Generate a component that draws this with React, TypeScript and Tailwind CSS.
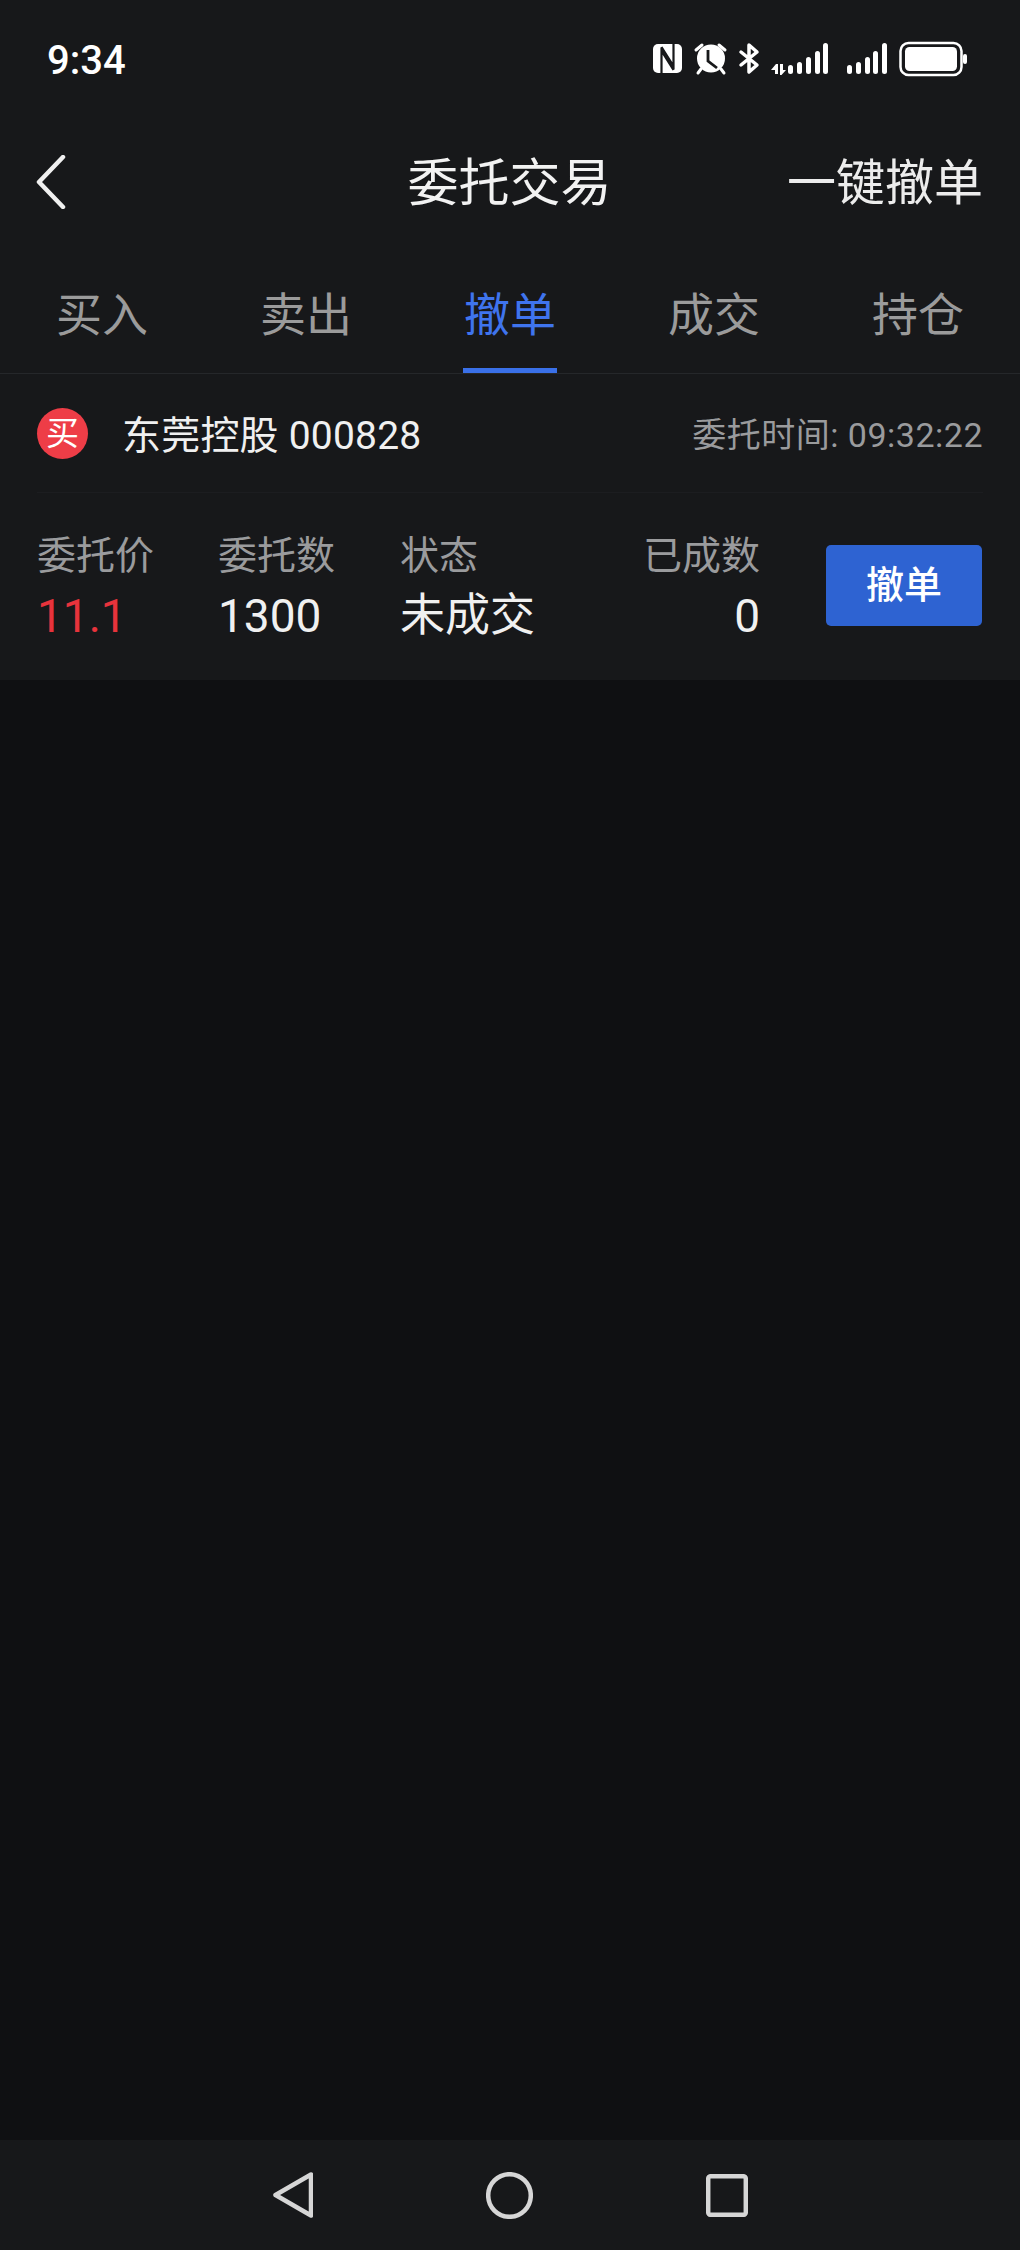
const cjk = "font-['Roboto','Noto_Sans_CJK_SC','Noto_Sans',sans-serif]";

function StatusIcons() {
  const bars = (xs: number[]) => {
    const tops = [65, 62, 57, 51, 43];
    return xs.map((x, i) => <rect key={x} x={x} y={tops[i]} width="5" height={74 - tops[i]} rx="2.5" fill="#fff" />);
  };
  return (
    <svg viewBox="650 40 320 38" className="w-[320px] h-[38px]">
      {/* NFC */}
      <rect x="653" y="44" width="29" height="29" rx="5" fill="#fff" />
      <path d="M661.500 74V51l12 19M673.500 43v23l-12-19" fill="none" stroke="#17181a" strokeWidth="2.200" />
      {/* Alarm */}
      <path d="M696 50l6-5M725 50l-6-5" stroke="#fff" strokeWidth="3" strokeLinecap="round" />
      <path d="M698 73l3-4M724 73l-3-4" stroke="#fff" strokeWidth="3" strokeLinecap="round" />
      <circle cx="711" cy="58.500" r="14" fill="#fff" />
      <path d="M708 50v11l9 7" fill="none" stroke="#17181a" strokeWidth="2.800" />
      {/* Bluetooth */}
      <path d="M741 52l16 13-8 7V45l8 7-16 13" fill="none" stroke="#fff" strokeWidth="3.500" strokeLinejoin="round" strokeLinecap="round" />
      {/* Up / down arrows */}
      <path d="M771 70l5-6h2v10h-3v-4zM780 64h3v6h3l-4.500 5H780z" fill="#fff" />
      {bars([788, 797, 806, 815, 823])}
      {/* Signal 2 */}
      {bars([847, 856, 865, 873, 882])}
      {/* Battery */}
      <rect x="900.500" y="43" width="61" height="32" rx="8" fill="none" stroke="#fff" strokeWidth="2.500" />
      <rect x="905" y="47" width="52" height="24" rx="4.500" fill="#fff" />
      <rect x="963" y="54" width="4" height="10" rx="2" fill="#fff" />
    </svg>
  );
}

function Column({ label, value, width, right, red, text }: { label: string; value: string; width: string; right?: boolean; red?: boolean; text?: boolean }) {
  return (
    <div className={`${width} ${right ? "text-right" : ""} flex flex-col`}>
      <div className="text-[39px] leading-[50px] text-[#9a9b9d]">{label}</div>
      <div className={`leading-[60px] mt-[5px] font-normal ${text ? "text-[45px]" : "text-[46px]"} ${red ? "text-[#e8333c]" : "text-[#f0f0f0]"}`}>{value}</div>
    </div>
  );
}

export default function App() {
  const tabs = ["买入", "卖出", "撤单", "成交", "持仓"];
  return (
    <div className={`${cjk} w-[1020px] h-[2250px] flex flex-col bg-[#0f1012] overflow-hidden`}>
      <div className="bg-[#17181a]">
        {/* Status bar */}
        <div className="h-[92px] pt-[40px] pl-[47px] pr-[50px] flex justify-between items-start">
          <span className="font-medium text-[40px] leading-[42px] text-white">9:34</span>
          <StatusIcons />
        </div>
        {/* Header */}
        <div className="h-[180px] pl-[36px] pr-[37px] grid grid-cols-[1fr_auto_1fr] items-center">
          <svg viewBox="0 0 30 54" className="w-[30px] h-[54px]">
            <path d="M27 2 3 27l24 25" fill="none" stroke="#f0f0f0" strokeWidth="4.500" strokeLinecap="round" strokeLinejoin="round" />
          </svg>
          <div className="text-[51px] leading-[60px] text-[#f2f2f2] mt-[3px]">委托交易</div>
          <div className="text-right text-[49px] leading-[60px] text-[#ececec] mt-[3px]">一键撤单</div>
        </div>
        {/* Tabs */}
        <div className="h-[102px] grid grid-cols-5 border-b border-[#25272a]">
          {tabs.map((t) => (
            <div key={t} className="flex flex-col items-center">
              <div className={`mt-[13px] h-[60px] text-[46px] leading-[60px] ${t === "撤单" ? "text-[#3f74ee]" : "text-[#9b9b9b]"}`}>{t}</div>
              <div className={`mt-[23px] w-[94px] h-[5px] ${t === "撤单" ? "bg-[#3a70e8]" : ""}`} />
            </div>
          ))}
        </div>
        {/* Order card */}
        <div className="px-[37px] h-[306px] flex flex-col">
          <div className="h-[119px] flex items-center justify-between border-b border-[#1c1d20]">
            <div className="flex items-center">
              <div className="w-[51px] h-[51px] rounded-full bg-[#ee3d47] flex items-center justify-center text-[33px] leading-none text-white">买</div>
              <div className="ml-[34px] mt-[6px] text-[39px] tracking-[0.2px] leading-[50px] text-[#f0f0f0]">东莞控股 000828</div>
            </div>
            <div className="mt-[4px] text-[34px] tracking-[0.5px] leading-[50px] text-[#9a9b9d]">委托时间: 09:32:22</div>
          </div>
          <div className="flex items-start pt-[38px]">
            <Column label="委托价" value="11.1" width="w-[181px]" red />
            <Column label="委托数" value="1300" width="w-[182px]" />
            <Column label="状态" value="未成交" width="w-[180px]" text />
            <Column label="已成数" value="0" width="w-[180px]" right />
            <button className="ml-[66px] mt-[14px] w-[156px] h-[81px] rounded-[5px] bg-[#2e63d2] text-[38px] font-medium text-white flex items-center justify-center">撤单</button>
          </div>
        </div>
      </div>
      <div className="flex-1" />
      {/* Navigation bar */}
      <div className="h-[110px] bg-[#17181a] flex items-center justify-center gap-[173px]">
        <svg viewBox="0 0 40 46" className="w-[40px] h-[46px]">
          <path d="M38 2.500 2.500 23 38 43.500z" fill="none" stroke="#d6d6d6" strokeWidth="4.500" strokeLinejoin="round" />
        </svg>
        <svg viewBox="0 0 47 47" className="w-[47px] h-[47px]">
          <circle cx="23.500" cy="23.500" r="21.300" fill="none" stroke="#d6d6d6" strokeWidth="4.500" />
        </svg>
        <svg viewBox="0 0 42 43" className="w-[42px] h-[43px]">
          <rect x="2.200" y="2.200" width="37.600" height="38.600" rx="2.500" fill="none" stroke="#d6d6d6" strokeWidth="4.500" />
        </svg>
      </div>
    </div>
  );
}
